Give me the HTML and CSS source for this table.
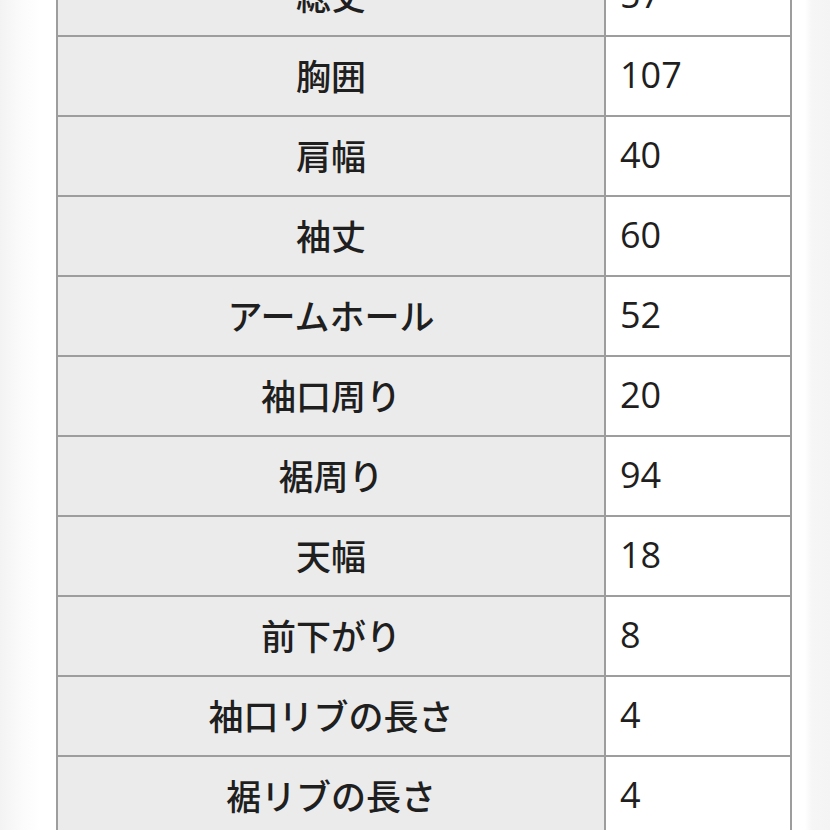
FILE: index.html
```html
<!DOCTYPE html>
<html lang="ja">
<head>
<meta charset="utf-8">
<link rel="stylesheet" href="styles.css">
</head>
<body>
<div class="page">
  <table class="size-table">
    <tbody>
      <tr><th>総丈</th><td>57</td></tr>
      <tr><th>胸囲</th><td>107</td></tr>
      <tr><th>肩幅</th><td>40</td></tr>
      <tr><th>袖丈</th><td>60</td></tr>
      <tr><th>アームホール</th><td>52</td></tr>
      <tr><th>袖口周り</th><td>20</td></tr>
      <tr><th>裾周り</th><td>94</td></tr>
      <tr><th>天幅</th><td>18</td></tr>
      <tr><th>前下がり</th><td>8</td></tr>
      <tr><th>袖口リブの長さ</th><td>4</td></tr>
      <tr><th>裾リブの長さ</th><td>4</td></tr>
    </tbody>
  </table>
</div>
</body>
</html>
```

FILE: styles.css
```css
html, body {
  margin: 0;
  padding: 0;
  height: 100%;
  overflow: hidden;
  background: #ffffff;
}

.page {
  height: 830px;
  overflow: hidden;
  padding-left: 56px;
  background: linear-gradient(to right, #f3f3f3 0px, #fbfbfb 22px, #ffffff 40px, #ffffff 805px, #f6f6f6 812px, #f4f4f4 830px);
}

.size-table {
  margin-top: -45px;
  border-collapse: separate;
  border-spacing: 0;
  border-top: 2px solid #9d9d9d;
  border-left: 2px solid #9d9d9d;
  font-family: "Open Sans", "Noto Sans CJK JP", sans-serif;
  color: #1f1f1f;
}

.size-table th,
.size-table td {
  height: 80px;
  padding: 0 0 4px 0;
  border-right: 2px solid #9d9d9d;
  border-bottom: 2px solid #9d9d9d;
  box-sizing: border-box;
}

.size-table th {
  width: 548px;
  background: #ebebeb;
  font-family: "Noto Sans CJK JP", sans-serif;
  font-weight: 500;
  font-size: 35px;
  text-align: center;
  vertical-align: middle;
}

.size-table td {
  width: 186px;
  background: #ffffff;
  font-size: 36px;
  font-weight: 400;
  text-align: left;
  padding-left: 14px;
  vertical-align: middle;
}
```
